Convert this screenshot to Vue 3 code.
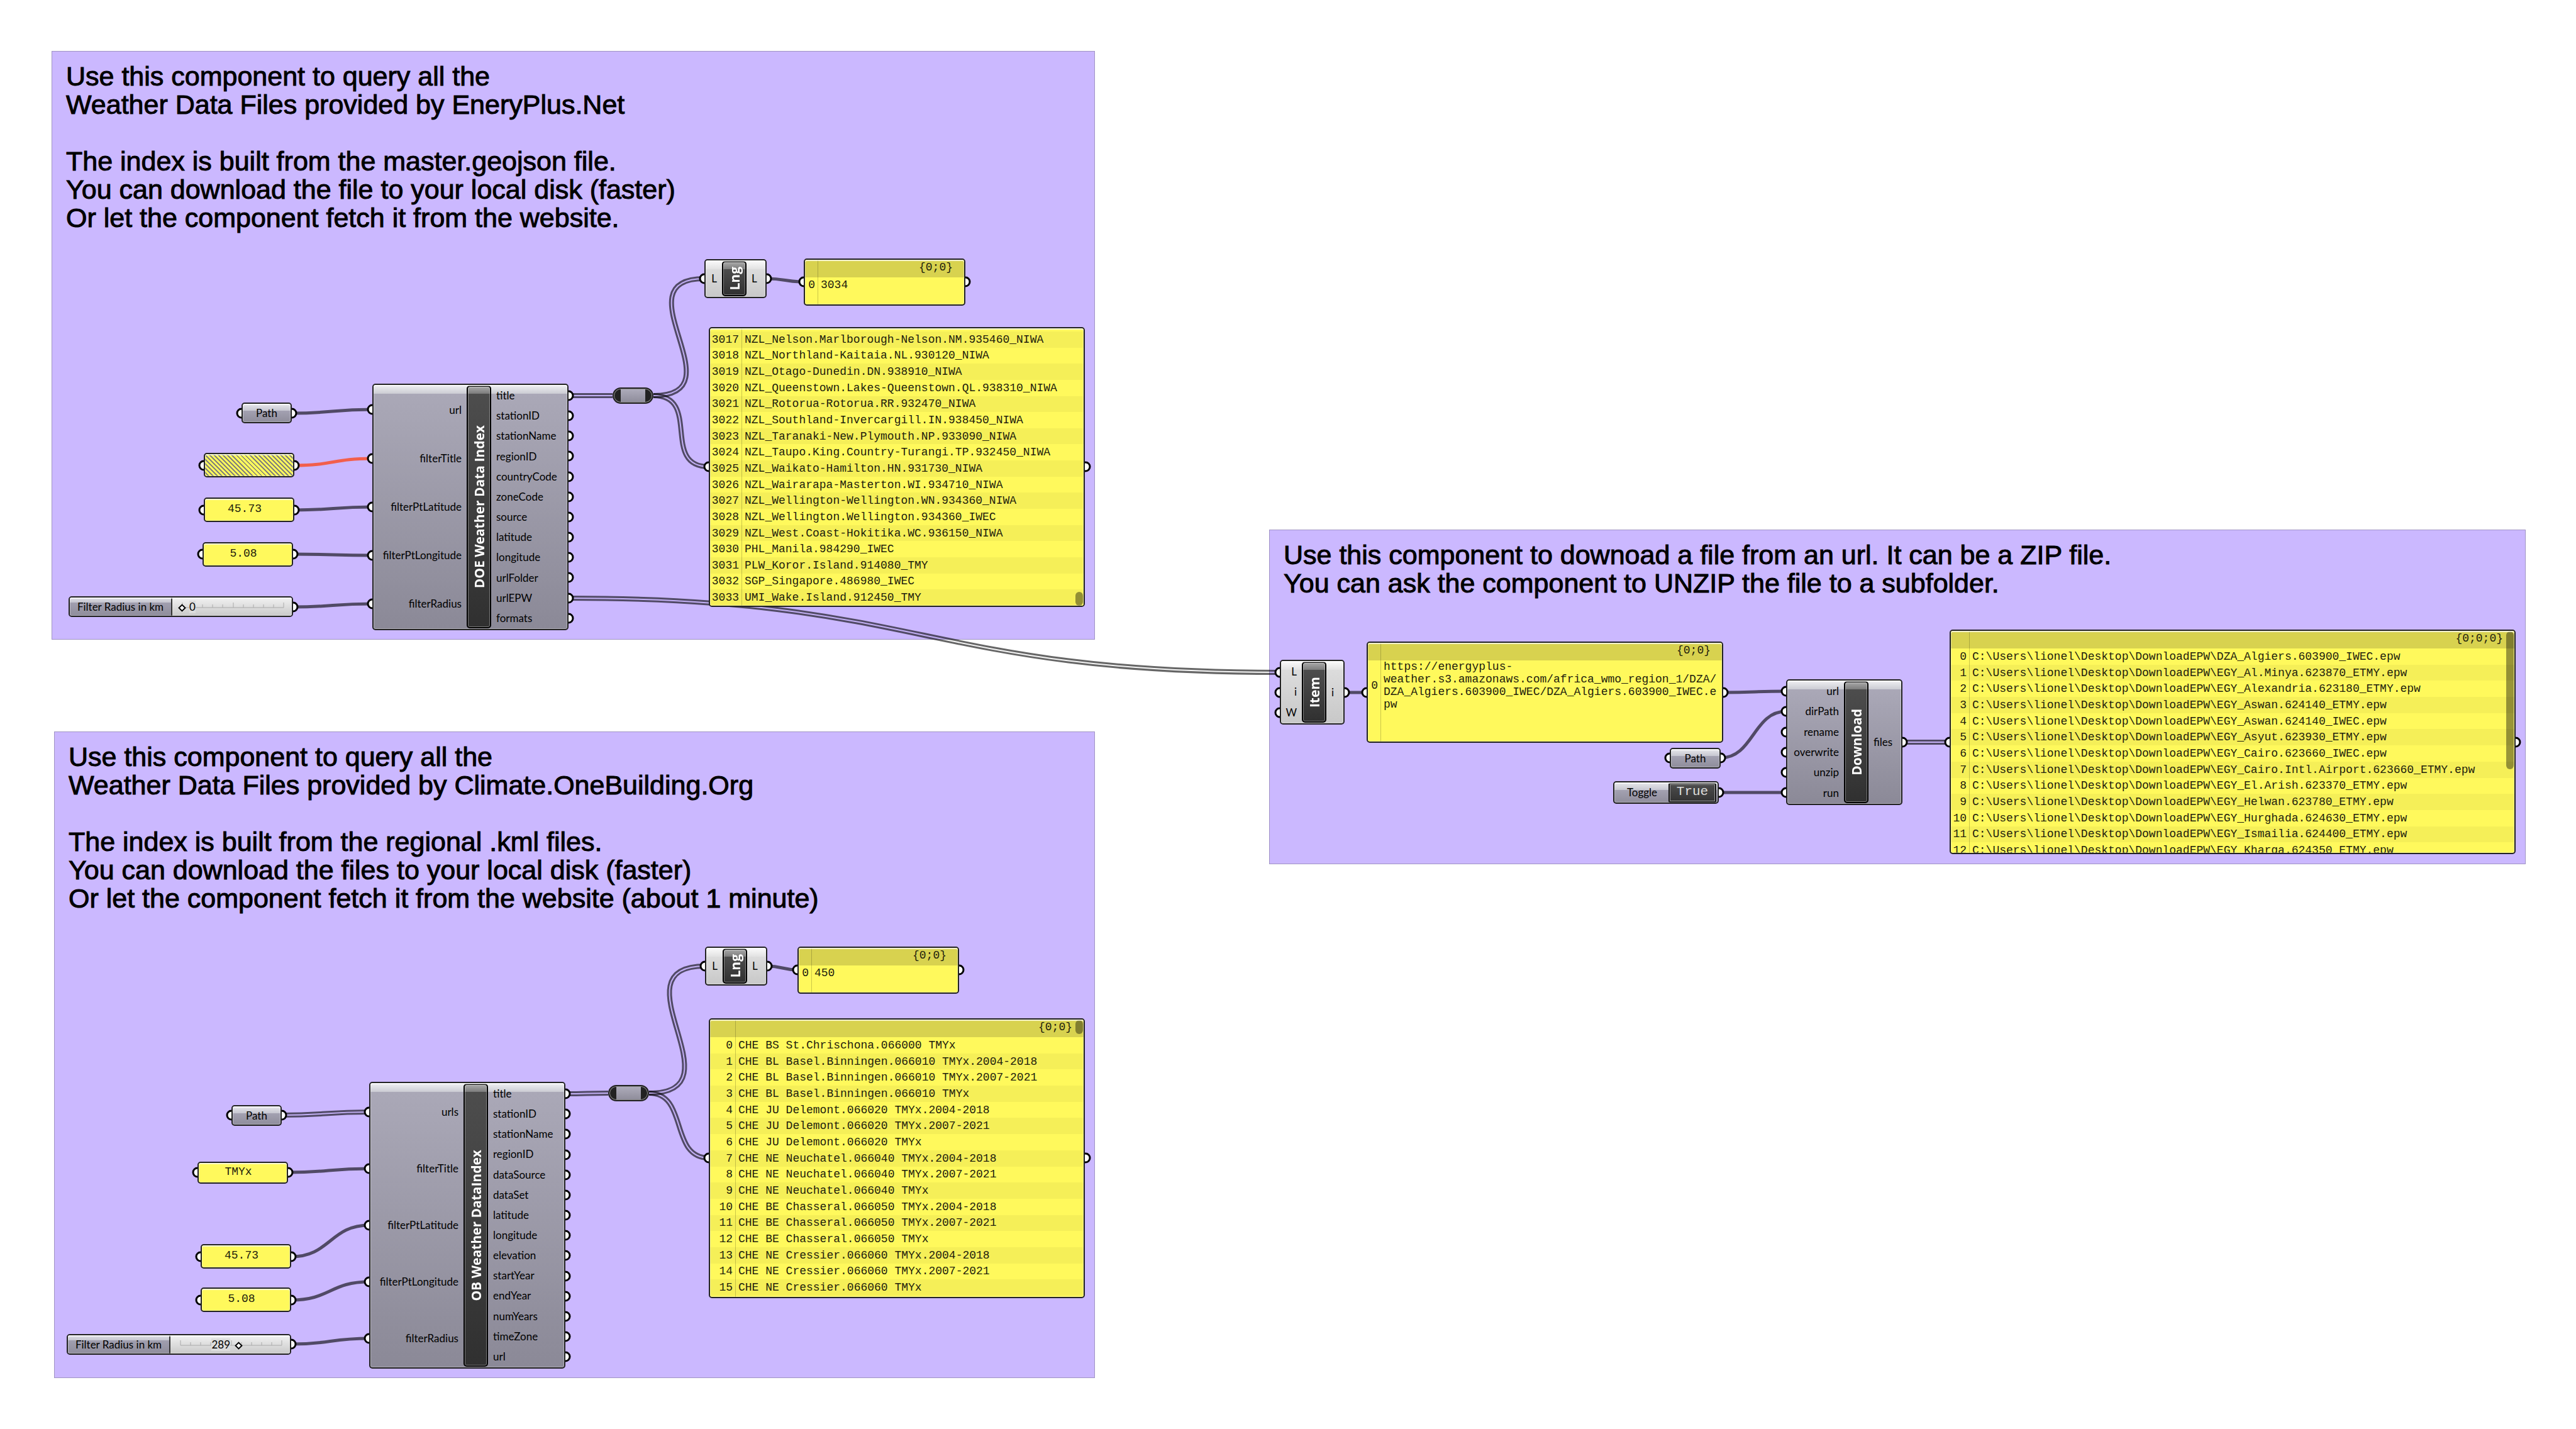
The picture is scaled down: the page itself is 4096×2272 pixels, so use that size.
<script setup>
// Canvas zoom: node positions are stored in document units.
const zoom = 0.8022
const px = (v) => Math.round(v * zoom)

const groups = [
  {
    id: 'energyplus', x: 102, y: 101, w: 2068, h: 1167,
    lines: [
      'Use this component to query all the',
      'Weather Data Files provided by EneryPlus.Net',
      '',
      'The index is built from the master.geojson file.',
      'You can download the file to your local disk (faster)',
      'Or let the component fetch it from the website.',
    ],
  },
  {
    id: 'onebuilding', x: 107, y: 1450, w: 2063, h: 1282,
    lines: [
      'Use this component to query all the',
      'Weather Data Files provided by Climate.OneBuilding.Org',
      '',
      'The index is built from the regional .kml files.',
      'You can download the files to your local disk (faster)',
      'Or let the component fetch it from the website (about 1 minute)',
    ],
  },
  {
    id: 'download', x: 2516, y: 1049, w: 2491, h: 663,
    lines: [
      'Use this component to downoad a file from an url. It can be a ZIP file.',
      'You can ask the component to UNZIP the file to a subfolder.',
    ],
  },
]

const nzl = [
  'NZL_Nelson.Marlborough-Nelson.NM.935460_NIWA',
  'NZL_Northland-Kaitaia.NL.930120_NIWA',
  'NZL_Otago-Dunedin.DN.938910_NIWA',
  'NZL_Queenstown.Lakes-Queenstown.QL.938310_NIWA',
  'NZL_Rotorua-Rotorua.RR.932470_NIWA',
  'NZL_Southland-Invercargill.IN.938450_NIWA',
  'NZL_Taranaki-New.Plymouth.NP.933090_NIWA',
  'NZL_Taupo.King.Country-Turangi.TP.932450_NIWA',
  'NZL_Waikato-Hamilton.HN.931730_NIWA',
  'NZL_Wairarapa-Masterton.WI.934710_NIWA',
  'NZL_Wellington-Wellington.WN.934360_NIWA',
  'NZL_Wellington.Wellington.934360_IWEC',
  'NZL_West.Coast-Hokitika.WC.936150_NIWA',
  'PHL_Manila.984290_IWEC',
  'PLW_Koror.Island.914080_TMY',
  'SGP_Singapore.486980_IWEC',
  'UMI_Wake.Island.912450_TMY',
]

const che = [
  'CHE BS St.Chrischona.066000 TMYx',
  'CHE BL Basel.Binningen.066010 TMYx.2004-2018',
  'CHE BL Basel.Binningen.066010 TMYx.2007-2021',
  'CHE BL Basel.Binningen.066010 TMYx',
  'CHE JU Delemont.066020 TMYx.2004-2018',
  'CHE JU Delemont.066020 TMYx.2007-2021',
  'CHE JU Delemont.066020 TMYx',
  'CHE NE Neuchatel.066040 TMYx.2004-2018',
  'CHE NE Neuchatel.066040 TMYx.2007-2021',
  'CHE NE Neuchatel.066040 TMYx',
  'CHE BE Chasseral.066050 TMYx.2004-2018',
  'CHE BE Chasseral.066050 TMYx.2007-2021',
  'CHE BE Chasseral.066050 TMYx',
  'CHE NE Cressier.066060 TMYx.2004-2018',
  'CHE NE Cressier.066060 TMYx.2007-2021',
  'CHE NE Cressier.066060 TMYx',
]

const epwFolder = 'C:\\Users\\lionel\\Desktop\\DownloadEPW\\'
const epw = [
  'DZA_Algiers.603900_IWEC.epw',
  'EGY_Al.Minya.623870_ETMY.epw',
  'EGY_Alexandria.623180_ETMY.epw',
  'EGY_Aswan.624140_ETMY.epw',
  'EGY_Aswan.624140_IWEC.epw',
  'EGY_Asyut.623930_ETMY.epw',
  'EGY_Cairo.623660_IWEC.epw',
  'EGY_Cairo.Intl.Airport.623660_ETMY.epw',
  'EGY_El.Arish.623370_ETMY.epw',
  'EGY_Helwan.623780_ETMY.epw',
  'EGY_Hurghada.624630_ETMY.epw',
  'EGY_Ismailia.624400_ETMY.epw',
  'EGY_Kharga.624350_ETMY.epw',
].map((name) => epwFolder + name)

const nodes = [
  // EnergyPlus index
  { id: 'path1', kind: 'param', label: 'Path', x: 479, y: 798, w: 100, h: 41 },
  { id: 'title1', kind: 'value', empty: true, x: 404, y: 898, w: 179, h: 49 },
  { id: 'lat1', kind: 'value', text: '45.73', x: 404, y: 986, w: 179, h: 49 },
  { id: 'lon1', kind: 'value', text: '5.08', x: 402, y: 1074, w: 179, h: 49 },
  { id: 'radius1', kind: 'slider', label: 'Filter Radius in km', value: 0, x: 136, y: 1182, w: 445, h: 41 },
  {
    id: 'doe', kind: 'component', title: 'DOE Weather Data Index', x: 738, y: 760, w: 389, h: 489, side: 147,
    inputs: ['url', 'filterTitle', 'filterPtLatitude', 'filterPtLongitude', 'filterRadius'],
    outputs: ['title', 'stationID', 'stationName', 'regionID', 'countryCode', 'zoneCode', 'source', 'latitude', 'longitude', 'urlFolder', 'urlEPW', 'formats'],
  },
  { id: 'relay1', kind: 'relay', x: 1214, y: 768, w: 81, h: 33 },
  { id: 'lng1', kind: 'component', light: true, title: 'Lng', x: 1396, y: 514, w: 123, h: 77, side: 25, inputs: ['L'], outputs: ['L'] },
  { id: 'count1', kind: 'list', branch: '{0;0}', start: 0, rows: ['3034'], gutter: 20, x: 1593, y: 512, w: 320, h: 93 },
  { id: 'list1', kind: 'list', bottom: true, start: 3017, rows: nzl, gutter: 50, thumb: [525, 27], x: 1405, y: 648, w: 746, h: 555 },

  // OneBuilding index
  { id: 'path2', kind: 'param', label: 'Path', x: 459, y: 2190, w: 100, h: 41 },
  { id: 'title2', kind: 'value', text: 'TMYx', x: 392, y: 2302, w: 179, h: 44 },
  { id: 'lat2', kind: 'value', text: '45.73', x: 398, y: 2466, w: 179, h: 49 },
  { id: 'lon2', kind: 'value', text: '5.08', x: 398, y: 2552, w: 179, h: 49 },
  { id: 'radius2', kind: 'slider', label: 'Filter Radius in km', value: 289, x: 132, y: 2644, w: 445, h: 41 },
  {
    id: 'ob', kind: 'component', title: 'OB Weather DataIndex', x: 732, y: 2144, w: 389, h: 569, side: 147,
    inputs: ['urls', 'filterTitle', 'filterPtLatitude', 'filterPtLongitude', 'filterRadius'],
    outputs: ['title', 'stationID', 'stationName', 'regionID', 'dataSource', 'dataSet', 'latitude', 'longitude', 'elevation', 'startYear', 'endYear', 'numYears', 'timeZone', 'url'],
  },
  { id: 'relay2', kind: 'relay', x: 1206, y: 2150, w: 81, h: 33 },
  { id: 'lng2', kind: 'component', light: true, title: 'Lng', x: 1398, y: 1876, w: 123, h: 77, side: 25, inputs: ['L'], outputs: ['L'] },
  { id: 'count2', kind: 'list', branch: '{0;0}', start: 0, rows: ['450'], gutter: 20, x: 1581, y: 1876, w: 320, h: 93 },
  { id: 'list2', kind: 'list', branch: '{0;0}', start: 0, rows: che, gutter: 40, thumb: [4, 27], x: 1405, y: 2018, w: 746, h: 555 },

  // Download
  { id: 'item', kind: 'component', light: true, title: 'Item', x: 2537, y: 1308, w: 128, h: 129, side: 32, inputs: ['L', 'i', 'W'], outputs: ['i'] },
  {
    id: 'url', kind: 'list', branch: '{0;0}', start: 0, gutter: 20, x: 2709, y: 1272, w: 707, h: 201,
    rows: ['https://energyplus-weather.s3.amazonaws.com/africa_wmo_region_1/DZA/DZA_Algiers.603900_IWEC/DZA_Algiers.603900_IWEC.epw'],
  },
  { id: 'path3', kind: 'param', label: 'Path', x: 3310, y: 1482, w: 101, h: 41 },
  { id: 'toggle', kind: 'toggle', label: 'Toggle', x: 3198, y: 1548, w: 209, h: 45 },
  {
    id: 'dl', kind: 'component', title: 'Download', x: 3540, y: 1346, w: 231, h: 249, side: 89,
    inputs: ['url', 'dirPath', 'rename', 'overwrite', 'unzip', 'run'],
    outputs: ['files'],
  },
  { id: 'list3', kind: 'list', branch: '{0;0;0}', start: 0, rows: epw, gutter: 29, thumb: [4, 273], x: 3864, y: 1248, w: 1122, h: 445 },
]

const byId = Object.fromEntries(nodes.map((n) => [n.id, n]))

function portPoint(id, side, index) {
  const n = byId[id]
  const list = side === 'in' ? n.inputs : n.outputs
  const count = list ? list.length : 1
  const y = n.y + 4 + ((n.h - 8) * (index + 0.5)) / count
  return { x: px(side === 'in' ? n.x : n.x + n.w), y: px(y) }
}

const ports = nodes.flatMap((n) => {
  if (n.kind === 'relay') return []
  const hasInput = n.kind !== 'slider' && n.kind !== 'toggle'
  const ins = hasInput ? (n.inputs || ['']).map((_, i) => portPoint(n.id, 'in', i)) : []
  const outs = (n.outputs || ['']).map((_, i) => portPoint(n.id, 'out', i))
  return [...ins, ...outs]
})

// from, output index, to, input index, style, tangent length
const links = [
  ['path1', 0, 'doe', 0, 'single'],
  ['title1', 0, 'doe', 1, 'empty'],
  ['lat1', 0, 'doe', 2, 'single'],
  ['lon1', 0, 'doe', 3, 'single'],
  ['radius1', 0, 'doe', 4, 'single'],
  ['doe', 0, 'relay1', 0, 'double'],
  ['relay1', 0, 'lng1', 0, 'double', 172],
  ['relay1', 0, 'list1', 0, 'double', 96],
  ['lng1', 0, 'count1', 0, 'single'],
  ['doe', 10, 'item', 0, 'double'],
  ['path2', 0, 'ob', 0, 'double'],
  ['title2', 0, 'ob', 1, 'single'],
  ['lat2', 0, 'ob', 2, 'single'],
  ['lon2', 0, 'ob', 3, 'single'],
  ['radius2', 0, 'ob', 4, 'single'],
  ['ob', 0, 'relay2', 0, 'double'],
  ['relay2', 0, 'lng2', 0, 'double', 185],
  ['relay2', 0, 'list2', 0, 'double', 78],
  ['lng2', 0, 'count2', 0, 'single'],
  ['item', 0, 'url', 0, 'single'],
  ['url', 0, 'dl', 0, 'single'],
  ['path3', 0, 'dl', 1, 'single'],
  ['toggle', 0, 'dl', 5, 'single'],
  ['dl', 0, 'list3', 0, 'double'],
]

const wires = links.map(([from, out, to, input, style, bend], i) => {
  const a = portPoint(from, 'out', out)
  const b = portPoint(to, 'in', input)
  const d = bend ? px(bend) : Math.round((b.x - a.x) / 2)
  return { id: `wire-${i}`, style, d: `M${a.x} ${a.y}C${a.x + d} ${a.y} ${b.x - d} ${b.y} ${b.x} ${b.y}` }
})

const box = (n) => ({ left: `${px(n.x)}px`, top: `${px(n.y)}px`, width: `${px(n.w)}px`, height: `${px(n.h)}px` })

const scaleLength = 161
const sliderMax = 500
function readout(n) {
  const at = Math.round((n.value / sliderMax) * scaleLength) + 16
  return n.value * 2 < sliderMax ? { left: `${at + 11}px` } : { right: `${193 - at + 11}px` }
}
const ticks = Array.from({ length: 11 }, (_, i) => ({ x: 16 + Math.round((i * scaleLength) / 10), tall: i % 5 === 0 }))
</script>

<template>
  <main class="canvas">
    <section v-for="g in groups" :key="g.id" class="group" :style="box(g)">
      <p v-for="(line, i) in g.lines" :key="i" class="note">{{ line }}</p>
    </section>

    <svg class="wires" aria-hidden="true">
      <defs>
        <template v-for="w in wires" :key="w.id">
          <mask v-if="w.style === 'double'" :id="w.id" maskUnits="userSpaceOnUse" x="0" y="0" width="100%" height="100%">
            <rect width="100%" height="100%" fill="#fff" />
            <path :d="w.d" fill="none" stroke="#111" stroke-width="2" />
          </mask>
        </template>
      </defs>
      <path
        v-for="w in wires"
        :key="w.id"
        :class="['wire', w.style]"
        :d="w.d"
        :mask="w.style === 'double' ? `url(#${w.id})` : null"
      />
      <circle v-for="(p, i) in ports" :key="i" class="port" :cx="p.x" :cy="p.y" r="7" />
    </svg>

    <template v-for="n in nodes" :key="n.id">
      <div v-if="n.kind === 'param'" class="node param" :style="box(n)">{{ n.label }}</div>

      <div v-else-if="n.kind === 'value'" class="node panel value" :class="{ empty: n.empty }" :style="box(n)">{{ n.text }}</div>

      <div v-else-if="n.kind === 'slider'" class="node slider" :style="box(n)">
        <label :for="n.id">{{ n.label }}</label>
        <div class="track">
          <svg class="ticks" aria-hidden="true">
            <path d="M16 16H177" />
            <path v-for="t in ticks" :key="t.x" :d="`M${t.x} ${t.tall ? 8 : 11}V16`" />
          </svg>
          <output :for="n.id" :style="readout(n)">{{ n.value }}</output>
          <input :id="n.id" type="range" min="0" :max="sliderMax" :value="n.value" />
        </div>
      </div>

      <div v-else-if="n.kind === 'toggle'" class="node param toggle" :style="box(n)">
        <label :for="n.id">{{ n.label }}</label>
        <button :id="n.id" type="button">True</button>
      </div>

      <div v-else-if="n.kind === 'relay'" class="relay" :style="box(n)"><span></span></div>

      <article v-else-if="n.kind === 'component'" class="node component" :class="{ light: n.light }" :style="box(n)">
        <ul class="inputs" :style="{ width: `${n.side}px` }">
          <li v-for="s in n.inputs" :key="s">{{ s }}</li>
        </ul>
        <h2><span>{{ n.title }}</span></h2>
        <ul class="outputs">
          <li v-for="s in n.outputs" :key="s">{{ s }}</li>
        </ul>
      </article>

      <div v-else class="node panel list" :class="{ bottom: n.bottom }" :style="box(n)">
        <p v-if="n.branch" class="branch">{{ n.branch }}</p>
        <table :style="n.rows.length > 1 ? { height: `${px(n.rows.length * 32)}px` } : null">
          <colgroup>
            <col :style="{ width: `${n.gutter}px` }" />
            <col />
          </colgroup>
          <tbody>
            <tr v-for="(row, i) in n.rows" :key="i" :class="{ shaded: (n.start + i) % 2 }">
              <td class="index">{{ n.start + i }}</td>
              <td class="item">{{ row }}</td>
            </tr>
          </tbody>
        </table>
        <i class="rule" :style="{ left: `${n.gutter}px` }"></i>
        <i v-if="n.thumb" class="thumb" :style="{ top: `${px(n.thumb[0]) - 2}px`, height: `${px(n.thumb[1])}px` }"></i>
      </div>
    </template>
  </main>
</template>

<style>
body {
  background: #fff;
}
</style>

<style scoped>
.canvas {
  position: relative;
  width: 100%;
  min-height: 100vh;
  overflow: hidden;
  color: #000;
  font-family: Lato, "Open Sans", sans-serif;
  font-size: 17px;
  line-height: 20px;
}

.group {
  position: absolute;
  box-sizing: border-box;
  padding: 17px 22px;
  border: 1px solid #a094c4;
  background: #cbb8ff;
}

.note {
  min-height: 45px;
  margin: 0;
  font: 43px/45px "Liberation Sans", Arial, sans-serif;
  white-space: nowrap;
  -webkit-text-stroke: 1px #000;
}

.wires {
  position: absolute;
  inset: 0;
  width: 100%;
  height: 100%;
}

.wire {
  fill: none;
  stroke: #000;
  stroke-opacity: 0.6;
  stroke-width: 5px;
}

.wire.double {
  stroke-width: 8px;
}

.wire.empty {
  stroke: #f25f4c;
  stroke-opacity: 1;
}

.port {
  fill: #fff;
  stroke: #000;
  stroke-width: 3px;
}

.node {
  position: absolute;
  box-sizing: border-box;
  overflow: hidden;
  border: 2px solid #222;
  border-radius: 5px;
}

.node::after {
  content: "";
  position: absolute;
  inset: 0;
  border-radius: 3px;
  box-shadow: inset 0 2px 1px rgba(255, 255, 255, 0.7), inset 0 0 0 1px rgba(255, 255, 255, 0.3);
  pointer-events: none;
}

.param {
  display: flex;
  align-items: center;
  justify-content: center;
  background: linear-gradient(#e8e8ec, #c6c6d0 38%, #a3a1b1 39%, #8f8d9b);
}

.panel {
  background: #fff95c;
  color: #22210c;
  font-family: "Liberation Mono", "Courier New", monospace;
  font-size: 18px;
}

.value {
  display: flex;
  align-items: center;
  justify-content: center;
  padding: 0 14px 4px 0;
}

.value.empty {
  background: repeating-linear-gradient(45deg, #fff95c 0 3px, #84847a 3px 5px);
}

.slider {
  display: flex;
}

.slider label {
  display: flex;
  flex: none;
  align-items: center;
  justify-content: center;
  box-sizing: border-box;
  width: 163px;
  border-right: 2px solid #333;
  background: linear-gradient(#e0e0e6, #c6c6d0 26%, #a19fb0 27%, #8f8d9b);
}

.track {
  position: relative;
  flex: 1;
  background: linear-gradient(#f2f2f2, #c9c9c9);
}

.ticks {
  position: absolute;
  inset: 0;
  width: 100%;
  height: 100%;
  fill: none;
  stroke: #aaa;
  stroke-width: 1px;
}

.track output {
  position: absolute;
  top: 5px;
  background: #dcdcdc;
}

.track input {
  position: absolute;
  top: 7px;
  left: 11px;
  width: 170px;
  height: 18px;
  margin: 0;
  background: none;
  appearance: none;
}

.track input::-webkit-slider-thumb {
  width: 9px;
  height: 9px;
  box-sizing: border-box;
  border: 2px solid #000;
  background: #fff;
  transform: rotate(45deg);
  appearance: none;
}

.toggle {
  padding: 1px 2px;
}

.toggle label {
  flex: 1;
  text-align: center;
}

.toggle button {
  width: 76px;
  height: 31px;
  padding: 0 0 4px;
  border: 2px solid #111;
  border-radius: 2px;
  background: linear-gradient(#4d4d4d, #333);
  box-shadow: inset 0 0 0 1px #999;
  color: #ddd;
  font: 21px/24px "Liberation Mono", "Courier New", monospace;
}

.relay {
  position: absolute;
  display: flex;
  justify-content: center;
  box-sizing: border-box;
  padding: 1px;
  border: 2px solid #222;
  border-radius: 14px;
  background: #222;
  box-shadow: inset 0 0 0 1px #8a8a8a;
}

.relay span {
  width: 39px;
  background: linear-gradient(#adabba, #8f8d9b);
}

.component {
  display: flex;
  padding: 1px;
  background: linear-gradient(#f0f0f3, #cbccd3 14px, #aaa8b7 14px, #8b8997);
}

.component.light {
  background: linear-gradient(#fbfbfb, #e2e2e2 14px, #dcdcdc 14px, #c8c8c8);
}

.component ul {
  display: grid;
  grid-auto-rows: 1fr;
  align-items: center;
  box-sizing: border-box;
  margin: 0;
  padding: 0;
  list-style: none;
}

.component .inputs {
  flex: none;
  padding-right: 8px;
  text-align: right;
}

.component .outputs {
  padding-left: 8px;
}

.component h2 {
  display: flex;
  flex: none;
  align-items: center;
  justify-content: center;
  box-sizing: border-box;
  width: 39px;
  margin: 0;
  border: 2px solid #000;
  border-radius: 5px;
  background: linear-gradient(#a8a8a8, #7c7c7c 11px, #4d4d4d 11px, #303030);
  box-shadow: inset 0 0 0 1px rgba(255, 255, 255, 0.35);
  color: #fff;
  font: bold 21px/24px "Open Sans", sans-serif;
}

.component h2 span {
  white-space: nowrap;
  writing-mode: vertical-rl;
  transform: rotate(180deg);
}

.list {
  display: flex;
  flex-direction: column;
}

.list.bottom {
  justify-content: flex-end;
}

.list table {
  flex: none;
  width: 100%;
  table-layout: fixed;
  border-spacing: 0;
}

.branch {
  flex: none;
  box-sizing: border-box;
  height: 28px;
  margin: 0;
  padding: 2px 18px 0 0;
  background: #d8d24f;
  text-align: right;
}

.list td {
  height: 24px;
  padding: 0;
}

.list td.index {
  padding-right: 4px;
  text-align: right;
}

.list td.item {
  padding: 0 4px 0 5px;
  overflow-wrap: anywhere;
}

.shaded {
  background: #f5ef58;
}

.rule {
  position: absolute;
  top: 0;
  bottom: 0;
  width: 1px;
  background: rgba(0, 0, 0, 0.2);
}

.thumb {
  position: absolute;
  right: 1px;
  width: 12px;
  border-radius: 6px;
  background: rgba(0, 0, 0, 0.4);
}
</style>
